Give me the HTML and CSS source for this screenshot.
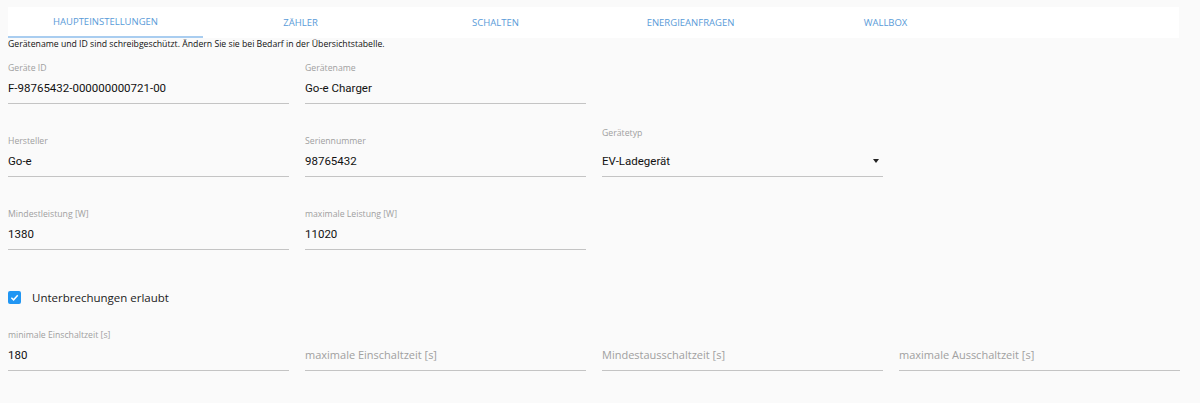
FILE: index.html
```
<!DOCTYPE html>
<html lang="de">
<head>
  <meta charset="UTF-8">
  <title>Geräteeinstellungen</title>
  <meta name="viewport" content="width=device-width, initial-scale=1.0">
  <link rel="stylesheet" href="styles.css">
</head>
<body>

  <div class="tabs">
    <div class="tab active">Haupteinstellungen</div>
    <div class="tab">Zähler</div>
    <div class="tab">Schalten</div>
    <div class="tab">Energieanfragen</div>
    <div class="tab">Wallbox</div>
  </div>

  <div class="notice">Gerätename und ID sind schreibgeschützt. Ändern Sie sie bei Bedarf in der Übersichtstabelle.</div>

  <div class="form-grid">
    <div class="field">
      <label>Geräte ID</label>
      <div class="value">F-98765432-000000000721-00</div>
    </div>
    <div class="field">
      <label>Gerätename</label>
      <div class="value">Go-e Charger</div>
    </div>
    <div class="spacer"></div>
    <div class="spacer"></div>

    <div class="field">
      <label>Hersteller</label>
      <div class="value">Go-e</div>
    </div>
    <div class="field">
      <label>Seriennummer</label>
      <div class="value">98765432</div>
    </div>
    <div class="field select">
      <label>Gerätetyp</label>
      <div class="value">EV-Ladegerät <span class="arrow"></span></div>
    </div>
    <div class="spacer"></div>

    <div class="field">
      <label>Mindestleistung [W]</label>
      <div class="value">1380</div>
    </div>
    <div class="field">
      <label>maximale Leistung [W]</label>
      <div class="value">11020</div>
    </div>
  </div>

  <div class="check-row">
    <span class="checkbox">
      <svg width="9" height="9" viewBox="0 0 10 10"><path d="M1.5 5.2 L4 7.6 L8.6 2.4" fill="none" stroke="#fff" stroke-width="1.6"/></svg>
    </span>
    <span class="check-label">Unterbrechungen erlaubt</span>
  </div>

  <div class="form-grid last">
    <div class="field">
      <label>minimale Einschaltzeit [s]</label>
      <div class="value">180</div>
    </div>
    <div class="field">
      <div class="value placeholder">maximale Einschaltzeit [s]</div>
    </div>
    <div class="field">
      <div class="value placeholder">Mindestausschaltzeit [s]</div>
    </div>
    <div class="field">
      <div class="value placeholder">maximale Ausschaltzeit [s]</div>
    </div>
  </div>

</body>
</html>
```

FILE: styles.css
```
body {
  margin: 0;
  padding: 7px 8px 0 8px;
  background-color: #fafafa;
  font-family: "Open Sans", "DejaVu Sans", sans-serif;
  color: #111;
}

.tabs {
  display: flex;
  width: 1171px;
  height: 31px;
  background-color: #ffffff;
}

.tab {
  width: 195px;
  box-sizing: border-box;
  text-align: center;
  text-transform: uppercase;
  font-size: 9.5px;
  line-height: 31px;
  color: #5a9bd8;
}

.tab.active {
  border-bottom: 2px solid #a9cdf0;
  line-height: 30px;
}

.notice {
  font-size: 8.7px;
  line-height: 12px;
  color: #111;
  white-space: nowrap;
}

.form-grid {
  display: grid;
  grid-template-columns: repeat(4, 281px);
  column-gap: 16px;
  row-gap: 31px;
  align-items: end;
  margin-top: 12px;
}

.field {
  display: flex;
  flex-direction: column;
  border-bottom: 1px solid #c4c4c4;
  padding-bottom: 7px;
}

.field label {
  font-size: 8.7px;
  line-height: 12px;
  color: #a0a0a0;
  margin-bottom: 6px;
}

.field.select label {
  margin-top: -8px;
  margin-bottom: 14px;
}

.value {
  font-family: Roboto, "Liberation Sans", Arial, sans-serif;
  font-size: 11.5px;
  line-height: 16px;
  color: #111;
  display: flex;
  justify-content: space-between;
  align-items: center;
}

.value.placeholder {
  font-family: "Open Sans", "DejaVu Sans", sans-serif;
  font-size: 11px;
  color: #a0a0a0;
}

.arrow {
  width: 0;
  height: 0;
  border-left: 3.5px solid transparent;
  border-right: 3.5px solid transparent;
  border-top: 4px solid #222;
  margin-right: 4px;
}

.spacer {
  height: 1px;
}

.check-row {
  display: flex;
  align-items: center;
  height: 16px;
  margin-top: 39px;
}

.checkbox {
  width: 13px;
  height: 13px;
  border-radius: 2px;
  background-color: #2196f3;
  display: flex;
  align-items: center;
  justify-content: center;
}

.check-label {
  margin-left: 11px;
  font-size: 11.5px;
  font-weight: 500;
  color: #222;
}

.form-grid.last {
  margin-top: 24px;
}
```
